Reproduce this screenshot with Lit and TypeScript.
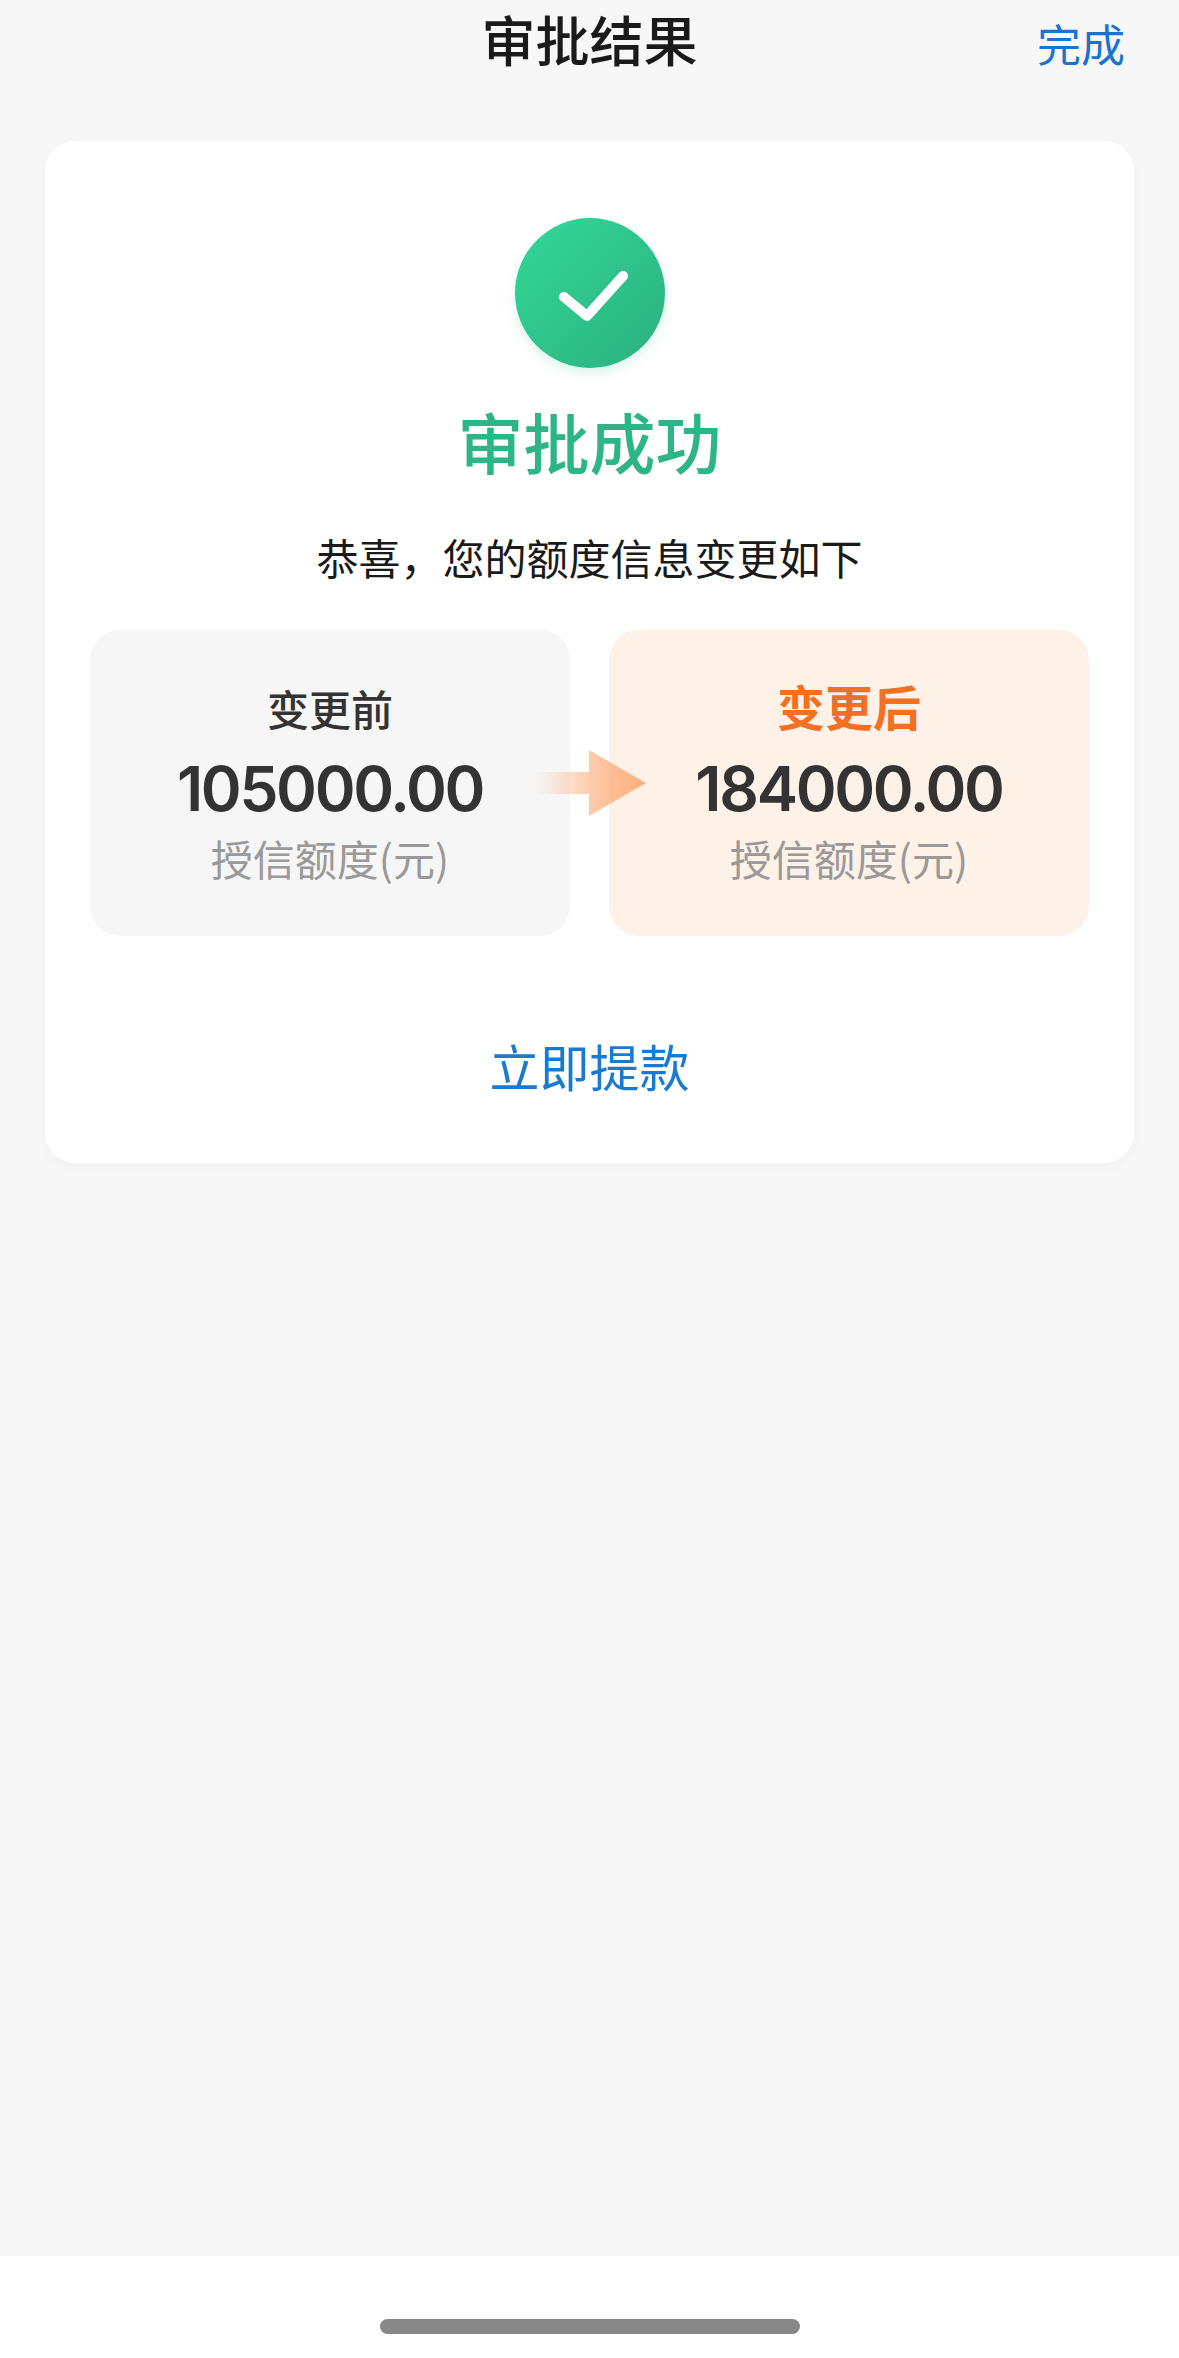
import { LitElement, html, css } from 'lit';
import { customElement } from 'lit/decorators.js';

@customElement('app-root')
export class AppRoot extends LitElement {
  static styles = css`
    :host {
      display: block;
      font-family: "Noto Sans CJK SC", "Noto Sans", sans-serif;
    }

    .page {
      display: flex;
      flex-direction: column;
      height: 2358px;
      background: #f7f7f7;
    }

    /* nav bar */
    .nav {
      display: grid;
      grid-template-columns: 1fr auto 1fr;
      align-items: start;
      height: 84px;
      padding: 0 54px;
      margin-bottom: 57px;
    }

    .nav-title {
      grid-column: 2;
      font-size: 54px;
      line-height: 78px;
      font-weight: 500;
      color: #1a1a1a;
    }

    .nav-action {
      grid-column: 3;
      justify-self: end;
      font-size: 44px;
      line-height: 86px;
      color: #1a73d2;
    }

    /* result card */
    .card {
      margin: 0 45px;
      height: 1022px;
      box-sizing: border-box;
      padding-top: 77px;
      display: flex;
      flex-direction: column;
      align-items: center;
      background: #fff;
      border-radius: 30px;
      box-shadow: 0 4px 14px rgba(0, 0, 0, 0.025);
    }

    .check {
      width: 150px;
      height: 150px;
      border-radius: 50%;
      display: flex;
      align-items: center;
      justify-content: center;
      background: linear-gradient(135deg, #33d898 0%, #2bb07f 100%);
      box-shadow: 0 5px 12px rgba(45, 181, 133, 0.18);
    }

    .status {
      margin-top: 24px;
      font-size: 66px;
      line-height: 96px;
      font-weight: 500;
      color: #2db585;
    }

    .hint {
      margin-top: 38px;
      font-size: 42px;
      line-height: 62px;
      color: #1a1a1a;
    }

    .compare {
      position: relative;
      margin-top: 42px;
      width: 999px;
      display: grid;
      grid-template-columns: 480px 480px;
      justify-content: space-between;
    }

    .box {
      height: 306px;
      border-radius: 30px;
      box-sizing: border-box;
      padding-top: 49px;
      display: flex;
      flex-direction: column;
      align-items: center;
    }

    .box.before {
      background: #f6f6f6;
    }

    .box.after {
      background: #fef1e8;
    }

    .box-title {
      font-size: 42px;
      line-height: 58px;
      font-weight: 500;
      color: #333;
    }

    .after .box-title {
      font-size: 48px;
      line-height: 52px;
      font-weight: 700;
      padding-bottom: 6px;
      color: #f36f21;
    }

    .amount {
      margin-top: 14px;
      font-family: Inter, "Noto Sans", sans-serif;
      font-size: 62px;
      line-height: 76px;
      font-weight: 600;
      letter-spacing: -2.3px;
      color: #333;
    }

    .unit {
      margin-top: 1px;
      font-size: 42px;
      line-height: 60px;
      color: #999;
    }

    .arrow {
      position: absolute;
      left: 446px;
      top: 120px;
    }

    .cta {
      margin-top: 93px;
      font-size: 50px;
      line-height: 72px;
      color: #1a7ad0;
    }

    /* home indicator */
    .home {
      margin-top: auto;
      height: 102px;
      background: #fff;
      display: flex;
      justify-content: center;
      padding-top: 63px;
      box-sizing: border-box;
    }

    .home-bar {
      width: 420px;
      height: 15px;
      border-radius: 8px;
      background: #888;
    }
  `;

  renderBox(kind: string, title: string, amount: string) {
    return html`
      <div class="box ${kind}">
        <div class="box-title">${title}</div>
        <div class="amount">${amount}</div>
        <div class="unit">授信额度(元)</div>
      </div>
    `;
  }

  render() {
    return html`
      <div class="page">
        <div class="nav">
          <div class="nav-title">审批结果</div>
          <div class="nav-action">完成</div>
        </div>

        <div class="card">
          <div class="check">
            <svg width="80" height="60" viewBox="0 0 80 60" fill="none">
              <path d="M14 34 L37 53 L73 13" stroke="#fff" stroke-width="10" stroke-linecap="round" stroke-linejoin="round" />
            </svg>
          </div>
          <div class="status">审批成功</div>
          <div class="hint">恭喜，您的额度信息变更如下</div>

          <div class="compare">
            ${this.renderBox('before', '变更前', '105000.00')}
            ${this.renderBox('after', '变更后', '184000.00')}
            <svg class="arrow" width="110" height="66" viewBox="0 0 110 66">
              <defs>
                <linearGradient id="arrowFade" x1="0" y1="0" x2="1" y2="0">
                  <stop offset="0" stop-color="#fdb88c" stop-opacity="0" />
                  <stop offset="0.5" stop-color="#fdb88c" stop-opacity="0.75" />
                  <stop offset="1" stop-color="#fdae7c" />
                </linearGradient>
              </defs>
              <path d="M0 22 H53 V0 L110 33 L53 66 V44 H0 Z" fill="url(#arrowFade)" />
            </svg>
          </div>

          <div class="cta">立即提款</div>
        </div>

        <div class="home"><div class="home-bar"></div></div>
      </div>
    `;
  }
}
